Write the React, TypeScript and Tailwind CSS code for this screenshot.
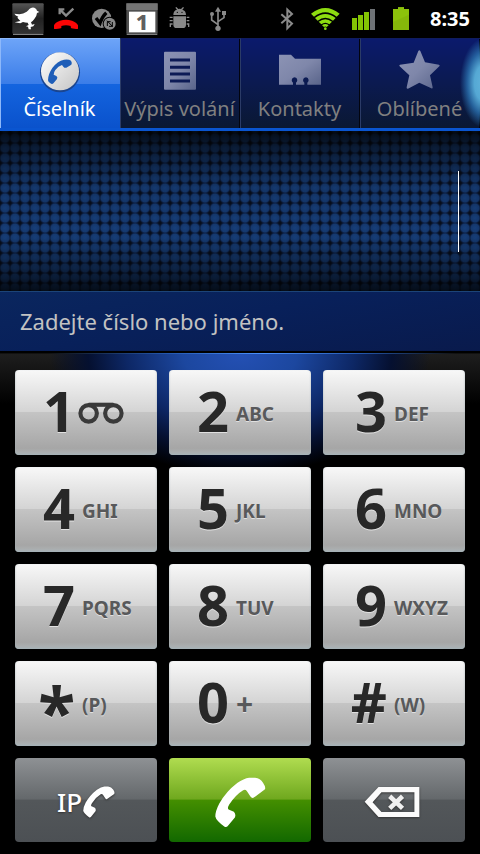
import { useState } from "react";
import type { ReactNode } from "react";
import clsx from "clsx";

const HANDSET =
  "M765 158L799 133Q804 127 794 112Q786 98 770 97H752Q736 99 716 113Q682 139 662 175Q650 198 650 214Q652 226 678 245Q683 248 687 244L709 217Q713 208 706 200L690 193Q685 189 692 178Q712 148 734 135Q740 131 745 137L756 154Q760 160 765 158Z";

function Handset({ className }: { className?: string }) {
  return (
    <svg viewBox="649 96 154 152" className={className} fill="#fff" aria-hidden="true">
      <path d={HANDSET} />
    </svg>
  );
}

function StatusIcon({ box, children }: { box: string; children: ReactNode }) {
  return (
    <svg viewBox={box} className="h-[38px] w-[38px] shrink-0" aria-hidden="true">
      {children}
    </svg>
  );
}

function StatusBar() {
  return (
    <header className="flex h-[38px] items-center justify-between bg-black pr-[10px] pl-[9px]">
      <div className="flex">
        <StatusIcon box="27 0 114 114">
          <defs>
            <linearGradient id="birdTile" x1="0" y1="0" x2="0" y2="1">
              <stop offset="0" stopColor="#565656" />
              <stop offset="0.5" stopColor="#222" />
              <stop offset="1" stopColor="#333" />
            </linearGradient>
          </defs>
          <rect x="37" y="10" width="94" height="91" rx="3" fill="url(#birdTile)" />
          <path d="M39 103H130" stroke="#999" strokeWidth="3" />
          <path
            fill="#fff"
            d="M43 41L58 43Q70 42 80 35Q86 31 88 27Q94 21 103 23Q110 26 111 32L118 36L111 39Q110 50 103 57Q98 64 93 67L96 74L104 72L100 79L92 81L93 88H86L84 80L78 79L86 75L83 68Q75 68 69 66L61 70L44 67L61 63L52 53L55 50Q46 47 43 41Z"
          />
        </StatusIcon>
        <StatusIcon box="141 0 114 114">
          <path d="M179 43V28H193M180 29L198 47L220 26" fill="none" stroke="#8a8a8a" strokeWidth="7" />
          <path
            fill="#fb0505"
            d="M162 86V76Q165 67 180 62Q198 57 216 62Q230 67 234 76V86Q232 88 228 87L214 85Q212 84 212 78Q198 73 184 78V84Q182 86 168 87Q163 88 162 86Z"
          />
        </StatusIcon>
        <StatusIcon box="255 0 114 114">
          <circle cx="305" cy="55" r="29" fill="#888" />
          <path d="M288 54L300 69Q306 50 319 38" fill="none" stroke="#000" strokeWidth="10" />
          <circle cx="329" cy="71" r="21" fill="#000" />
          <circle cx="329" cy="71" r="18" fill="#888" />
          <path d="M322 78V65H332M337 66V79H327M321 62L338 80" fill="none" stroke="#000" strokeWidth="3" />
        </StatusIcon>
        <StatusIcon box="369 0 114 114">
          <rect x="379" y="10" width="94" height="91" rx="2" fill="#505050" />
          <rect x="379" y="10" width="94" height="20" fill="#747474" />
          <path d="M380 103H472" stroke="#999" strokeWidth="3" />
          <rect x="387" y="35" width="79" height="62" fill="#fff" />
          <text x="426" y="90" textAnchor="middle" fill="#606060" fontSize="66" fontWeight="800">
            1
          </text>
        </StatusIcon>
        <StatusIcon box="483 0 114 114">
          <g fill="#8a8a8a">
            <path d="M520 45Q520 31 531 29L526 23L529 21L535 27Q539 26 543 27L549 21L552 23L547 29Q558 32 558 45Z" />
            <path d="M520 49H558V74Q558 84 548 84H530Q520 84 520 74Z" />
            <path d="M509 50H518V54H509ZM509 60H518V64H509ZM509 70H518V74H513V81H509ZM560 50H568V54H560ZM560 60H568V64H560ZM560 70H568V81H564V74H560Z" />
          </g>
          <circle cx="532" cy="37" r="2" fill="#000" />
          <circle cx="546" cy="37" r="2" fill="#000" />
        </StatusIcon>
        <StatusIcon box="597 0 114 114">
          <g fill="none" stroke="#8a8a8a" strokeWidth="5">
            <path d="M654 28V84M654 74L635 60V45M654 65L672 53V40" />
          </g>
          <path d="M654 20L663 35H645Z" fill="#8a8a8a" />
          <circle cx="654" cy="85" r="8" fill="#8a8a8a" />
          <circle cx="636" cy="42" r="6" fill="#8a8a8a" />
          <rect x="666" y="33" width="12" height="12" fill="#8a8a8a" />
        </StatusIcon>
      </div>
      <div className="flex items-center">
        <StatusIcon box="84 0 114 114">
          <path d="M124 43L156 71L142 85V29L156 42L124 70" fill="none" stroke="#8a8a8a" strokeWidth="6" />
        </StatusIcon>
        <StatusIcon box="198 0 114 114">
          <path fill="#8ddc10" d="M213 41Q256 7 299 41L290 50Q256 23 222 50Z" />
          <path fill="#8ddc10" d="M225 54Q256 30 287 54L279 62Q256 44 233 62Z" />
          <path fill="#8ddc10" d="M236 65Q256 50 276 65L268 73Q256 63 244 73Z" />
          <path fill="#8ddc10" d="M246 76Q256 68 266 76L260 81Q256 78 252 81Z" />
          <circle cx="256" cy="86" r="4" fill="#8ddc10" />
        </StatusIcon>
        <StatusIcon box="312 0 114 114">
          <rect x="336" y="54" width="15" height="36" fill="#84c404" />
          <rect x="354" y="45" width="15" height="45" fill="#84c404" />
          <rect x="372" y="36" width="15" height="54" fill="#84c404" />
          <rect x="390" y="27" width="15" height="63" fill="#6e7276" />
        </StatusIcon>
        <StatusIcon box="426 0 114 114">
          <path d="M459 27H474V22H492V27H507V90H459Z" fill="#86b80a" />
          <path d="M459 27H474V22H492V27H507V44L459 66Z" fill="#8cc20b" />
        </StatusIcon>
        <time className="ml-[10px] text-[20px] leading-6 font-bold text-white">8:35</time>
      </div>
    </header>
  );
}

function TabIcon({ name }: { name: string }) {
  if (name === "dialer") {
    return (
      <svg viewBox="114 40 132 132" className="h-11 w-11" aria-hidden="true">
        <defs>
          <linearGradient id="disc" x1="0" y1="0" x2="1" y2="1">
            <stop offset="0" stopColor="#fff" />
            <stop offset="1" stopColor="#c4c4c4" />
          </linearGradient>
        </defs>
        <circle cx="180" cy="110" r="60" fill="#1a4590" />
        <circle cx="180" cy="107" r="57" fill="url(#disc)" />
        <path
          fill="#1f5eb8"
          d="M144 134Q144 116 157 97Q172 76 192 72Q206 70 213 75Q217 81 214 87L199 96Q194 98 190 93L186 88Q175 91 166 103Q161 110 161 117L169 121Q174 124 171 130L161 142Q157 147 151 143Q144 139 144 134Z"
        />
      </svg>
    );
  }
  return (
    <svg viewBox={name === "contacts" ? "114 40 132 132" : "474 40 132 132"} className="h-11 w-11" aria-hidden="true">
      <defs>
        <linearGradient id={`metal-${name}`} x1="0" y1="0" x2="1" y2="1">
          <stop offset="0" stopColor="#8c93b4" />
          <stop offset="0.5" stopColor="#7f87aa" />
          <stop offset="1" stopColor="#59648a" />
        </linearGradient>
      </defs>
      {name === "log" && (
        <>
          <rect x="492" y="48" width="96" height="114" rx="3" fill="url(#metal-log)" />
          <path d="M510 73H570M510 95H570M510 115H570M510 136H570" stroke="#0c1a55" strokeWidth="9" />
        </>
      )}
      {name === "contacts" && (
        <path
          fill="url(#metal-contacts)"
          d="M117 57H153L165 69H243V147H202V141Q206 138 206 133Q205 126 198 125Q190 126 189 133Q189 138 193 141V147H168V141Q172 138 172 133Q171 126 164 125Q156 126 155 133Q155 138 159 141V147H117Z"
        />
      )}
      {name === "favorites" && (
        <path
          fill="url(#metal-favorites)"
          d="M535 46Q538 42 541 46L555 80L597 87Q601 89 598 92L570 119L578 155Q578 160 574 158L538 141L504 159Q499 160 500 155L508 119L479 92Q476 89 480 87L521 81Z"
        />
      )}
    </svg>
  );
}

const tabs = [
  { id: "dialer", label: "Číselník" },
  { id: "log", label: "Výpis volání" },
  { id: "contacts", label: "Kontakty" },
  { id: "favorites", label: "Oblíbené" },
];

function Tabs() {
  const [active, setActive] = useState("dialer");
  return (
    <nav className="relative grid grid-cols-4 overflow-hidden border-b-[3px] border-[#0a55d0]">
      {tabs.map((t) => (
        <button
          key={t.id}
          type="button"
          onClick={() => setActive(t.id)}
          className={clsx(
            "flex h-[90px] flex-col items-center gap-1 border-t border-l pt-[10px] pr-[2px] text-[20px] leading-6 whitespace-nowrap",
            active === t.id
              ? "border-[#8db8fa] bg-[linear-gradient(#6da4f8_0%,#3b7de8_50%,#1464df_51%,#0a52cc_100%)] text-white"
              : "border-t-[#101c60] border-l-[#2b3b66] bg-[linear-gradient(#0b1a6c_0%,#0b1a50_50%,#0a1833_100%)] text-[#808080] shadow-[inset_-1px_0_0_#02040e]"
          )}
        >
          <TabIcon name={t.id} />
          {t.label}
        </button>
      ))}
      <span className="pointer-events-none absolute top-0 -right-7 h-[90px] w-12 bg-[radial-gradient(closest-side,#62b4dc_0%,#55a8d4_40%,#2a70aecc_70%,transparent_100%)]" />
    </nav>
  );
}

function Display() {
  return (
    <section>
      <div className="relative flex h-40 items-center bg-black bg-[radial-gradient(circle_at_5px_5px,#17407c_0px,#15386e_4px,#0c1f42_5px,#080e1c_6px)] bg-[length:10px_10px] bg-[position:0_2px] pr-[21px] pl-5">
        <div className="pointer-events-none absolute inset-0 bg-[linear-gradient(rgb(0_0_0/.8)_0%,rgb(0_0_0/.55)_10%,rgb(0_0_0/.1)_35%,rgb(0_0_0/0)_65%,rgb(0_0_0/.5)_90%,rgb(0_0_0/.8)_100%)]" />
        <input
          id="number"
          type="tel"
          className="relative h-20 min-w-0 flex-1 bg-transparent text-right text-5xl text-white caret-transparent outline-none"
        />
        <span className="relative h-[81px] w-px bg-white" />
      </div>
      <label
        htmlFor="number"
        className="flex h-[60px] items-center border-t border-[#1c4478] bg-[linear-gradient(170deg,#0a265e_0%,#08205a_45%,#091a4c_100%)] px-5 text-[22px] text-[#c2c2c2]"
      >
        Zadejte číslo nebo jméno.
      </label>
    </section>
  );
}

const keys = [
  { digit: "1", letters: "" },
  { digit: "2", letters: "ABC" },
  { digit: "3", letters: "DEF" },
  { digit: "4", letters: "GHI" },
  { digit: "5", letters: "JKL" },
  { digit: "6", letters: "MNO" },
  { digit: "7", letters: "PQRS" },
  { digit: "8", letters: "TUV" },
  { digit: "9", letters: "WXYZ" },
  { digit: "*", letters: "(P)" },
  { digit: "0", letters: "+" },
  { digit: "#", letters: "(W)" },
];

function Voicemail() {
  return (
    <svg viewBox="236 130 134 64" className="-ml-1 h-[22px] w-[46px]" fill="none" stroke="#3a3a3a" strokeWidth="12" aria-hidden="true">
      <circle cx="267" cy="163" r="24" />
      <circle cx="339" cy="163" r="24" />
      <path d="M267 138H339" />
    </svg>
  );
}

function Keypad() {
  return (
    <section className="border-t-2 border-black bg-black">
      <div className="h-px bg-[linear-gradient(90deg,#111_10%,#2458b0_35%,#4b92ff_55%,#2458b0_75%,#111_95%)]" />
      <div className="grid grid-cols-3 gap-3 bg-[radial-gradient(ellipse_190px_120px_at_50%_0,#2450b4_0%,#1c479f_30%,#0d2765_60%,#051030_80%,transparent_100%),linear-gradient(#1e1e1e,#000_50px)] px-[15px] pt-4 pb-3">
        {keys.map((k, i) => (
          <button
            key={k.digit}
            type="button"
            className={clsx(
              "flex h-[85px] items-center gap-[7px] rounded-[4px] bg-[linear-gradient(#f8f8f8_0%,#d4d4d4_49%,#c4c4c4_50%,#a6a6a6_92%,#aeb4b6_100%)] font-bold shadow-[inset_0_-1px_2px_#a4b2b8] [text-shadow:0_1px_0_#e0e0e0]",
              i % 3 === 2 ? "pl-7" : "pl-6"
            )}
          >
            <span
              className={clsx(
                "flex w-9 justify-end pb-[5px] leading-[60px] text-[#282828]",
                k.digit === "*" ? "pt-5 text-[68px]" : "text-[56px]"
              )}
            >
              {k.digit}
            </span>
            {k.digit === "1" ? (
              <Voicemail />
            ) : (
              <span className={clsx("text-[#58595b]", k.letters === "+" ? "text-[30px]" : "pt-1 text-[19px]")}>{k.letters}</span>
            )}
          </button>
        ))}
        <button
          type="button"
          className="flex h-[84px] items-center justify-center gap-px rounded-[4px] bg-[linear-gradient(#8e9194_0%,#64686b_49%,#53575a_50%,#4c5054_100%)] pt-1 text-[26px] font-medium text-white [text-shadow:0_1px_2px_#333]"
        >
          IP
          <Handset className="h-8 w-8 drop-shadow-[0_1px_1px_#333]" />
        </button>
        <button
          type="button"
          aria-label="Volat"
          className="flex h-[84px] items-center justify-center rounded-[4px] bg-[linear-gradient(#b0dc50_0%,#6fa81e_49%,#448f00_50%,#126800_100%)] pt-1"
        >
          <Handset className="h-[51px] w-[51px]" />
        </button>
        <button
          type="button"
          aria-label="Smazat"
          className="flex h-[84px] items-center justify-center rounded-[4px] bg-[linear-gradient(#8e9194_0%,#64686b_49%,#53575a_50%,#4c5054_100%)] pt-1 pr-1"
        >
          <svg viewBox="1090 123 170 95" className="h-8 w-14 drop-shadow-[0_1px_1px_#333]" aria-hidden="true">
            <path
              fill="#fbfbfb"
              fillRule="evenodd"
              d="M1092 170L1134 125H1258V216H1134ZM1116 171L1143 201H1243V141H1143Z"
            />
            <path d="M1168 153L1207 190M1207 153L1168 190" stroke="#f0f0f0" strokeWidth="14" />
          </svg>
        </button>
      </div>
    </section>
  );
}

export default function App() {
  return (
    <main className="min-h-screen bg-black font-['Noto_Sans',sans-serif]">
      <StatusBar />
      <Tabs />
      <Display />
      <Keypad />
    </main>
  );
}
